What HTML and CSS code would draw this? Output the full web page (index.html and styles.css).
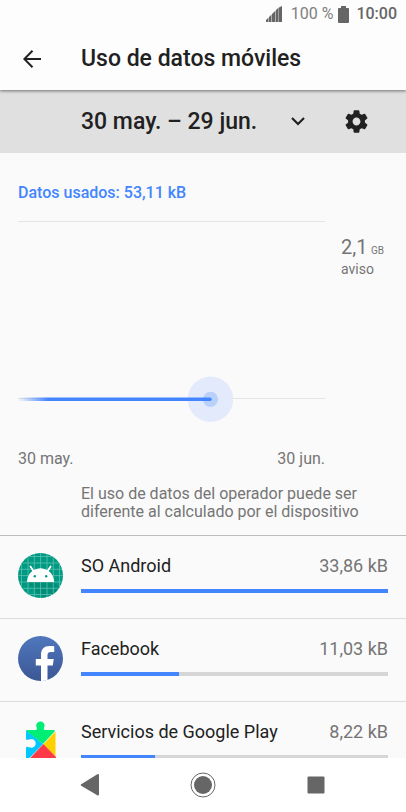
FILE: index.html
```html
<!DOCTYPE html>
<html lang="es">
<head>
<meta charset="utf-8">
<meta name="viewport" content="width=device-width, initial-scale=1">
<title>Uso de datos móviles</title>
<link rel="stylesheet" href="styles.css">
</head>
<body>
<div class="status">
  <svg class="signal" width="16" height="16" viewBox="0 0 16 16" aria-hidden="true">
    <path d="M0 16v-2l2.500-2.500V16zM3 16v-5l2.500-2.500V16zM6 16V8l3.500-3.500V16zM10 16V4l2.600-2.500V16zM13 16V1.500L16 0v16z"/>
  </svg>
  <span class="percent">100 %</span>
  <svg class="battery" width="11" height="17" viewBox="0 0 11 17" aria-hidden="true">
    <path d="M3 0h5v2h2q1 0 1 1v13q0 1-1 1H1q-1 0-1-1V3q0-1 1-1h2z"/>
  </svg>
  <time class="clock">10:00</time>
</div>

<header class="appbar">
  <button class="icon-button" type="button" aria-label="Atrás">
    <svg width="18" height="18" viewBox="0 0 18 18" fill="none" stroke="#212121" stroke-width="2">
      <path d="M18 9H2M9.500.8L1.300 9l8.200 8.200"/>
    </svg>
  </button>
  <h1>Uso de datos móviles</h1>
</header>

<main>
  <div class="cycle">
    <div class="period">
      <select aria-label="Periodo">
        <option>30 may. – 29 jun.</option>
      </select>
      <svg class="chevron" width="14" height="9" viewBox="0 0 14 9" fill="none" stroke="#212121" stroke-width="2.200" aria-hidden="true">
        <path d="M1 1l6 6 6-6"/>
      </svg>
    </div>
    <button class="icon-button" type="button" aria-label="Configuración">
      <svg width="27" height="27" viewBox="0 0 24 24" fill="#212121">
        <path d="M19.430 12.980c.04-.32.07-.64.07-.98s-.03-.66-.07-.98l2.110-1.650c.19-.15.24-.42.120-.64l-2-3.460c-.12-.22-.39-.3-.61-.22l-2.490 1c-.52-.4-1.080-.73-1.690-.98l-.38-2.650C14.460 2.180 14.250 2 14 2h-4c-.25 0-.46.180-.49.420l-.38 2.650c-.61.250-1.170.590-1.690.980l-2.490-1c-.23-.09-.49 0-.61.220l-2 3.460c-.13.220-.07.490.120.640l2.110 1.650c-.04.320-.07.650-.07.980s.03.660.070.980l-2.110 1.650c-.19.150-.24.420-.12.640l2 3.460c.12.220.39.300.61.220l2.490-1c.52.400 1.080.730 1.690.980l.38 2.650c.03.240.24.420.49.420h4c.25 0 .46-.18.49-.42l.38-2.650c.61-.25 1.170-.59 1.690-.98l2.490 1c.23.090.49 0 .61-.22l2-3.460c.12-.22.07-.49-.12-.64l-2.110-1.650zM12 15.500c-1.930 0-3.500-1.570-3.500-3.500s1.570-3.500 3.500-3.500 3.500 1.570 3.500 3.500-1.570 3.500-3.500 3.500z"/>
      </svg>
    </button>
  </div>

  <section class="usage">
    <h2>Datos usados: 53,11 kB</h2>
    <div class="chart">
      <svg class="plot" viewBox="0 0 307 202" role="img" aria-label="Gráfico de uso">
        <defs>
          <linearGradient id="fade" gradientUnits="userSpaceOnUse" x1="0" x2="30" y1="0" y2="0">
            <stop offset="0" stop-color="#4285ff" stop-opacity="0"/>
            <stop offset="1" stop-color="#4285ff"/>
          </linearGradient>
        </defs>
        <path fill="#e4e4e4" d="M0 0h307v1H0zM0 177h307v1H0z"/>
        <circle cx="192.500" cy="178.300" r="22.700" fill="#e3eafb"/>
        <circle cx="192.500" cy="178.300" r="7.600" fill="#b9d0fb"/>
        <path fill="url(#fade)" d="M0 176.500h192a1.700 1.700 0 0 1 0 3.400H0z"/>
      </svg>
      <div class="limit">
        <div><span class="amount">2,1</span> <small>GB</small></div>
        <div>aviso</div>
      </div>
      <div class="range"><span>30 may.</span><span>30 jun.</span></div>
    </div>
    <p class="note">El uso de datos del operador puede ser diferente al calculado por el dispositivo</p>
  </section>

  <ul class="apps">
    <li>
      <svg width="45" height="45" viewBox="0 0 45 45" aria-hidden="true">
        <defs>
          <clipPath id="disc"><circle cx="22.500" cy="22.500" r="22.500"/></clipPath>
        </defs>
        <g clip-path="url(#disc)">
          <path fill="#009a83" d="M0 0h45v45H0z"/>
          <path fill="#008773" d="M9 29h27l9 9v7H24z" opacity=".6"/>
          <path stroke="#5cc0b1" stroke-width=".8" d="M3.500 0v45M10 0v45M16.300 0v45M22.600 0v45M29 0v45M35.300 0v45M41.500 0v45M0 3.500h45M0 10h45M0 16.300h45M0 22.600h45M0 29h45M0 35.300h45M0 41.500h45"/>
        </g>
        <path fill="#fff" d="M9 29c.3-6 3-10 7.500-12.300 4-2 8-2 12 0C33 19 35.800 23 36.200 29z"/>
        <path stroke="#fff" stroke-width="1.800" stroke-linecap="round" d="M12.500 13.500l3.200 5M32.600 13.500l-3.200 5"/>
        <circle cx="16.800" cy="23.200" r="1.200" fill="#009a83"/>
        <circle cx="28.200" cy="23.200" r="1.200" fill="#009a83"/>
      </svg>
      <div class="app">
        <div class="line"><span>SO Android</span><span class="size">33,86 kB</span></div>
        <div class="bar"><div class="fill" style="width:100%"></div></div>
      </div>
    </li>
    <li>
      <svg width="45" height="45" viewBox="0 0 45 45" aria-hidden="true">
        <defs>
          <linearGradient id="blue" x1="0" x2="0" y1="0" y2="1">
            <stop offset="0" stop-color="#5077bd"/>
            <stop offset="1" stop-color="#3b5795"/>
          </linearGradient>
        </defs>
        <circle cx="22.500" cy="22.500" r="22.500" fill="url(#blue)"/>
        <path fill="#fff" d="M23 45V29.500h-5.200V23H23v-4.500c0-5.500 3.200-8.600 8.400-8.600 1.800 0 3.300.1 4.800.4v5.600h-3.400c-2.600 0-3.300 1.300-3.300 3.300V23h6.200l-.9 6.500h-5.300v14.400Q26.500 45 23 45z"/>
      </svg>
      <div class="app">
        <div class="line"><span>Facebook</span><span class="size">11,03 kB</span></div>
        <div class="bar"><div class="fill" style="width:32%"></div></div>
      </div>
    </li>
    <li>
      <svg width="45" height="45" viewBox="0 0 45 45" aria-hidden="true">
        <path fill="#00ee76" d="M9 11h8.500q2 0 1.500-2-.8-1.200-.8-2.300a4.200 4.200 0 0 1 8.400 0q0 1.100-.8 2.300-.5 2 1.500 2H36l1 1-12 13L8 12z"/>
        <path fill="#00c8ff" d="M8 11.500L25 25 8 42.500V29q0-1.300 1.500-1.200 1 .8 3 .8a4.300 4.300 0 1 0 0-8.400q-2 0-3 .8Q8 21 8 19.500z"/>
        <path fill="#ffd000" d="M37.500 12.500v25L25.300 25.500z"/>
        <path fill="#ff3a48" d="M25.300 25L38 38v5H8.500z"/>
      </svg>
      <div class="app">
        <div class="line"><span>Servicios de Google Play</span><span class="size">8,22 kB</span></div>
        <div class="bar"><div class="fill" style="width:24%"></div></div>
      </div>
    </li>
  </ul>
</main>

<nav class="navbar" aria-label="Sistema">
  <button type="button" aria-label="Volver">
    <svg width="26" height="26" viewBox="0 0 26 26"><path fill="#666" d="M20.300 2.300q1.700-.8 1.700 1v19q0 1.800-1.700 1L4.200 13.800q-1.200-.8 0-1.600z"/></svg>
  </button>
  <button type="button" aria-label="Inicio">
    <svg width="26" height="26" viewBox="0 0 26 26"><circle cx="13" cy="13" r="9" fill="#666"/><circle cx="13" cy="13" r="12" fill="none" stroke="#666"/></svg>
  </button>
  <button type="button" aria-label="Recientes">
    <svg width="26" height="26" viewBox="0 0 26 26"><rect x="4.500" y="4.500" width="17" height="17" rx="1" fill="#666"/></svg>
  </button>
</nav>
</body>
</html>
```
FILE: styles.css
```css
* {
  box-sizing: border-box;
}

body {
  margin: 0;
  height: 100vh;
  display: flex;
  flex-direction: column;
  overflow: hidden;
  background: #fafafa;
  color: #212121;
  font-family: Roboto, "Liberation Sans", sans-serif;
  font-size: 16px;
  line-height: 18px;
}

h1, h2, p, ul {
  margin: 0;
  padding: 0;
}

button {
  border: 0;
  padding: 0;
  background: none;
  display: flex;
  align-items: center;
  justify-content: center;
}

.status {
  flex: none;
  position: relative;
  z-index: 2;
  height: 28px;
  padding-right: 9px;
  display: flex;
  align-items: center;
  justify-content: flex-end;
  background: #fdfdfd;
  color: #666;
  fill: #666;
}

.percent {
  margin-left: 9px;
  color: #808080;
}

.battery {
  margin-left: 5px;
}

.clock {
  margin-left: 7px;
  font-weight: 500;
}

.appbar {
  flex: none;
  position: relative;
  z-index: 1;
  height: 62px;
  padding-left: 18px;
  display: flex;
  align-items: center;
  gap: 36px;
  background: #fdfdfd;
  box-shadow: 0 1px 3px rgba(0, 0, 0, 0.5);
}

.icon-button {
  width: 27px;
  height: 27px;
}

h1 {
  font-size: 23px;
  line-height: 28px;
  font-weight: 500;
}

main {
  flex: 1;
  min-height: 0;
  overflow: hidden;
}

.cycle {
  height: 63px;
  padding: 0 36px 0 81px;
  display: flex;
  align-items: center;
  justify-content: space-between;
  background: #e0e0e0;
}

.period {
  width: 224px;
  display: grid;
  align-items: center;
}

.period > * {
  grid-area: 1 / 1;
}

.period select {
  appearance: none;
  width: 100%;
  border: 0;
  padding: 0;
  background: none;
  color: inherit;
  font: 500 23px/28px Roboto, "Liberation Sans", sans-serif;
}

.chevron {
  justify-self: end;
  pointer-events: none;
}

.usage {
  padding: 31px 18px 14px;
  border-bottom: 1px solid #bdbdbd;
  color: #757575;
}

h2 {
  margin-bottom: 19px;
  font-size: 16px;
  line-height: 18px;
  font-weight: 500;
  color: #4285ff;
}

.chart {
  display: grid;
  grid-template-columns: 1fr 47px;
  column-gap: 16px;
}

.plot {
  display: block;
  width: 100%;
}

.limit {
  padding-top: 15px;
  font-size: 14px;
}

.limit div {
  white-space: nowrap;
}

.amount {
  font-size: 20px;
  line-height: 22px;
}

.limit small {
  font-size: 10px;
}

.range {
  margin: 27px 0 17px;
  display: flex;
  justify-content: space-between;
}

.note {
  padding-left: 63px;
}

.apps {
  list-style: none;
  font-size: 18px;
  line-height: 22px;
}

.apps li {
  height: 83px;
  padding: 17px 18px 0;
  display: flex;
  align-items: flex-start;
  gap: 18px;
  border-bottom: 1px solid #dcdcdc;
}

.apps svg {
  flex: none;
}

.app {
  flex: 1;
  padding-top: 2px;
}

.line {
  display: flex;
  justify-content: space-between;
  margin-bottom: 12px;
}

.size {
  color: #757575;
}

.bar {
  height: 4px;
  background: #d6d6d6;
}

.fill {
  height: 100%;
  background: #4285ff;
}

.navbar {
  flex: none;
  height: 54px;
  padding: 0 34px;
  display: flex;
  align-items: center;
  background: #fff;
}

.navbar button {
  flex: 1;
}
```
